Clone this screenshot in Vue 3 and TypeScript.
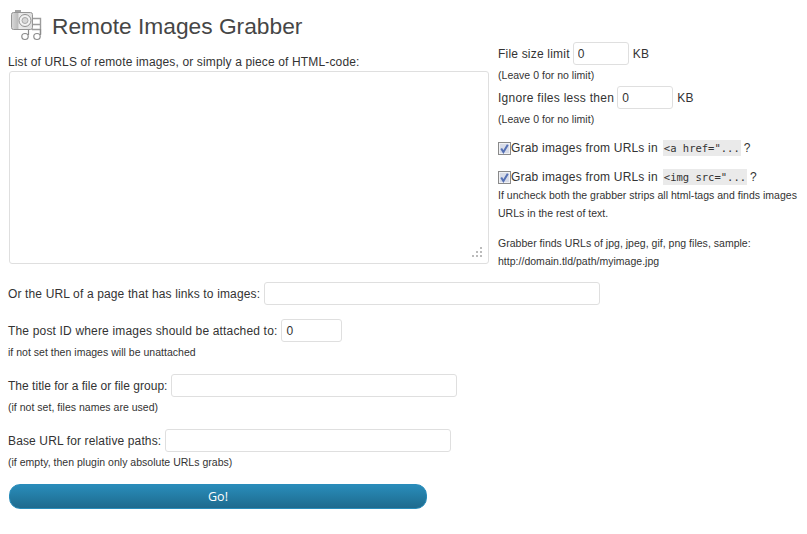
<script setup lang="ts">
const hints: string[] = ['Leave 0 for no limit']
const rows = [
  { label: 'Or the URL of a page that has links to images:', value: '', cls: 'w-url', track: '', hint: '' },
  { label: 'The post ID where images should be attached to:', value: '0', cls: 'w-id', track: 'loose', hint: 'if not set then images will be unattached' },
  { label: 'The title for a file or file group:', value: '', cls: 'w-title', track: 'tight', hint: '(if not set, files names are used)' },
  { label: 'Base URL for relative paths:', value: '', cls: 'w-title', track: 'snug', hint: '(if empty, then plugin only absolute URLs grabs)' },
]
const limits = [
  { label: 'File size limit', track: '' },
  { label: 'Ignore files less then', track: 'wider' },
]
const grabs = ['<a href="...', '<img src="...']
const grip = [[8, 0], [4, 4], [8, 4], [0, 8], [4, 8], [8, 8]]
</script>

<template>
  <div class="page">
    <header class="head">
      <svg class="logo" width="36" height="34" viewBox="0 0 36 34">
        <defs>
          <linearGradient id="cam" x1="0" y1="0" x2="1" y2="0">
            <stop offset="0" stop-color="#dadada" />
            <stop offset="0.3" stop-color="#bcbcbc" />
            <stop offset="0.36" stop-color="#eaeaea" />
            <stop offset="1" stop-color="#dedede" />
          </linearGradient>
        </defs>
        <rect x="6" y="1" width="6" height="2" fill="#a5a5a5" />
        <path d="M23 9.5h8.5v16M23 15.5h8.5M23 20.5h8.5" fill="none" stroke="#9c9c9c" stroke-width="1.4" />
        <path d="M19.5 26V20M31.5 26V20" stroke="#8c8c8c" stroke-width="1.2" />
        <rect x="2.5" y="3.5" width="21" height="17" rx="2" fill="url(#cam)" stroke="#959595" />
        <circle cx="16" cy="11.5" r="6" fill="#f2f2f2" stroke="#909090" />
        <circle cx="16" cy="11.5" r="3" fill="#d6d6d6" stroke="#a8a8a8" />
        <ellipse cx="16" cy="27.5" rx="3.2" ry="3" fill="#fff" stroke="#8c8c8c" stroke-width="1.2" />
        <ellipse cx="28" cy="27.5" rx="3.2" ry="3" fill="#fff" stroke="#8c8c8c" stroke-width="1.2" />
      </svg>
      <h2 class="title">Remote Images Grabber</h2>
    </header>

    <div class="top">
      <div class="left">
        <label class="list-label">List of URLS of remote images, or simply a piece of HTML-code:</label>
        <div class="area-wrap">
          <textarea class="area"></textarea>
          <svg class="grip" width="10" height="10" viewBox="0 0 10 10">
            <rect v-for="p in grip" :key="p.join()" :x="p[0]" :y="p[1]" width="2" height="2" fill="#bbb" />
          </svg>
        </div>
      </div>
      <div class="right">
        <template v-for="l in limits" :key="l.label">
          <div class="line" :class="l.track">
            <span>{{ l.label }}</span>
            <input class="field w-kb" value="0" />
            <span>KB</span>
          </div>
          <p class="hint lim">({{ hints[0] }})</p>
        </template>
        <div class="grab" v-for="g in grabs" :key="g">
          <span class="check">
            <svg width="13" height="13" viewBox="0 0 13 13">
              <rect x="0.5" y="0.5" width="12" height="12" fill="#e6e7ee" stroke="#8a8a8a" />
              <rect x="1.5" y="1.5" width="10" height="10" fill="#d8dce8" stroke="#f0f1f5" />
              <path d="M3.2 6.5 5.4 10 9.8 2.8" fill="none" stroke="#5570b4" stroke-width="2" />
            </svg>
          </span>
          <span class="grab-text">Grab images from URLs in</span>
          <code class="code">{{ g }}</code>
          <span>?</span>
        </div>
        <p class="hint para">If uncheck both the grabber strips all html-tags and finds images<br />URLs in the rest of text.</p>
        <p class="hint para second">Grabber finds URLs of jpg, jpeg, gif, png files, sample:<br />http://domain.tld/path/myimage.jpg</p>
      </div>
    </div>

    <div class="rows">
      <div class="row" v-for="r in rows" :key="r.label">
        <div class="line" :class="r.track">
          <span>{{ r.label }}</span>
          <input class="field" :class="r.cls" :value="r.value" />
        </div>
        <p v-if="r.hint" class="hint">{{ r.hint }}</p>
      </div>
    </div>

    <button class="go" type="button">Go!</button>
  </div>
</template>

<style scoped>
.page {
  width: 807px;
  height: 534px;
  box-sizing: border-box;
  padding: 9px 0 0 8px;
  overflow: hidden;
  background: #fff;
  color: #333;
  font-family: "Liberation Sans", Arial, sans-serif;
  font-size: 12px;
  letter-spacing: 0.14px;
}
.head {
  display: flex;
  align-items: center;
  gap: 7px;
  height: 33px;
  padding-left: 1px;
}
.logo { flex: none; }
.title {
  margin: 0;
  font-size: 22.75px;
  font-weight: 400;
  letter-spacing: 0;
  color: #464646;
  line-height: 30px;
}
.top { display: flex; }
.left { width: 490px; flex: none; padding-top: 12px; }
.list-label { display: block; line-height: 17px; }
.area-wrap { position: relative; width: 480px; margin-left: 1px; }
.area {
  display: block;
  box-sizing: border-box;
  width: 480px;
  height: 193px;
  margin: 0;
  border: 1px solid #dfdfdf;
  border-radius: 3px;
  outline: none;
  resize: none;
}
.grip { position: absolute; right: 7px; bottom: 7px; }
.right { width: 309px; flex: none; letter-spacing: 0.2px; }
.line { display: flex; align-items: center; gap: 3px; height: 23px; white-space: nowrap; }
.tight { letter-spacing: 0.02px; }
.snug { letter-spacing: 0.13px; }
.loose { letter-spacing: 0.17px; }
.wider { letter-spacing: 0.28px; }
.field {
  box-sizing: border-box;
  height: 23px;
  margin: 0 1px 0 0;
  padding: 3px 4px;
  border: 1px solid #dfdfdf;
  border-radius: 3px;
  font: 12px "Liberation Sans", Arial, sans-serif;
  color: #333;
  background: #fff;
  outline: none;
}
.w-kb { width: 56px; }
.w-url { width: 336px; }
.w-id { width: 61px; }
.w-title { width: 286px; }
.hint {
  margin: 0;
  font-size: 10.5px;
  letter-spacing: 0.02px;
  line-height: 18px;
  color: #333;
  white-space: nowrap;
}
.lim { margin: 0 0 1px; height: 20px; padding-top: 1px; box-sizing: border-box; }
.grab { display: flex; align-items: center; height: 18px; margin-top: 10px; white-space: nowrap; }
.grab + .grab { margin-top: 11px; }
.check { display: block; width: 13px; height: 13px; flex: none; }
.check svg { display: block; }
.grab-text { margin-right: 5px; }
.code {
  font-family: "DejaVu Sans Mono", monospace;
  font-size: 10.5px;
  letter-spacing: 0;
  line-height: 16px;
  padding: 0 1px;
  background: #eaeaea;
  color: #333;
  margin-right: 3px;
}
.para { margin-top: 0; }
.second { margin-top: 12px; }
.rows { padding-top: 12px; }
.row { margin-bottom: 14px; }
.row .line { gap: 4px; }
.row .hint { height: 17px; margin-top: 1px; letter-spacing: 0.02px; }
.go {
  display: block;
  width: 418px;
  height: 25px;
  margin: 0 0 0 1px;
  padding: 0;
  border: 1px solid #298cba;
  border-radius: 11px;
  background: linear-gradient(#298cba, #21759b 70%, #1f6a8e);
  color: #fff;
  font: 500 12.5px "Open Sans", "Liberation Sans", Arial, sans-serif;
}
</style>
